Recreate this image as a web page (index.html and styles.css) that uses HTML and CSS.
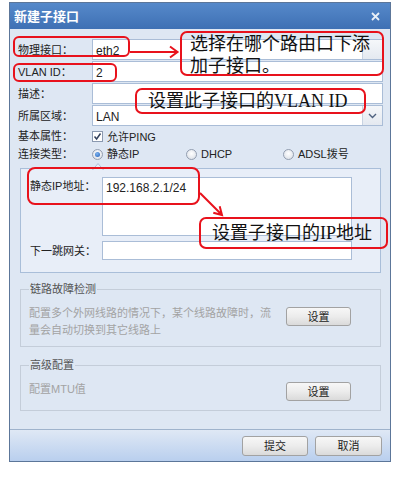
FILE: index.html
```html
<!DOCTYPE html>
<html>
<head>
<meta charset="utf-8">
<link rel="stylesheet" href="styles.css">
</head>
<body>
<div class="dialog">
  <div class="titlebar">
    <span class="title">新建子接口</span>
    <svg class="close" width="9" height="9" viewBox="0 0 9 9"><path d="M1 1L8 8M8 1L1 8"/></svg>
  </div>
  <div class="content">
    <div class="row"><span class="lbl">物理接口：</span><div class="field"><span class="val v-low">eth2</span><span class="dd"></span></div></div>
    <div class="row"><span class="lbl">VLAN ID：</span><div class="field"><span class="val v-low">2</span></div></div>
    <div class="row"><span class="lbl">描述：</span><div class="field"></div></div>
    <div class="row"><span class="lbl">所属区域：</span><div class="field"><span class="val v-low">LAN</span><span class="dd"><svg width="9" height="6" viewBox="0 0 9 6"><path d="M1 1L4.5 4.5L8 1"/></svg></span></div></div>
    <div class="row small"><span class="lbl">基本属性：</span><span class="check"><svg width="9" height="9" viewBox="0 0 9 9"><path d="M1.5 4.5L3.6 7L7.5 1.5"/></svg></span><span>允许PING</span></div>
    <div class="row small"><span class="lbl">连接类型：</span>
      <span class="opt o1"><span class="radio on"></span>静态IP</span>
      <span class="opt o2"><span class="radio"></span>DHCP</span>
      <span class="opt"><span class="radio"></span>ADSL拨号</span>
    </div>
    <div class="panel">
      <svg class="notch" width="12" height="8" viewBox="0 0 12 8"><polygon points="0,8 6,1 12,8" class="nfill"/><polyline points="0.5,8 6,1.5 11.5,8" class="nline"/></svg>
      <div class="prow"><span class="plbl">静态IP地址：</span><div class="area"><span class="val">192.168.2.1/24</span></div></div>
      <div class="prow p2"><span class="plbl">下一跳网关：</span><div class="inp"></div></div>
    </div>
    <fieldset class="fs1">
      <legend>链路故障检测</legend>
      <div class="fsrow">
        <div class="desc">配置多个外网线路的情况下，某个线路故障时，流<br>量会自动切换到其它线路上</div>
        <button class="btn set">设置</button>
      </div>
    </fieldset>
    <fieldset class="fs2">
      <legend>高级配置</legend>
      <div class="fsrow">
        <div class="desc">配置MTU值</div>
        <button class="btn set">设置</button>
      </div>
    </fieldset>
  </div>
  <div class="footer">
    <button class="btn ok">提交</button>
    <button class="btn cancel">取消</button>
  </div>
</div>

<div class="note n1">选择在哪个路由口下添<br>加子接口。</div>
<div class="note n2">设置此子接口的VLAN ID</div>
<div class="note n3">设置子接口的IP地址</div>
<div class="rbox r1"></div>
<div class="rbox r2"></div>
<div class="rbox r3"></div>
<svg class="arrows" width="393" height="478" viewBox="0 0 393 478">
  <path d="M130 52H177M170 46.5L177.5 52L170 57.5"/>
  <path d="M200 193L222 215M213.3 212.7L222 215L219.7 206.3"/>
</svg>
</body>
</html>
```

FILE: styles.css
```css
* { box-sizing: border-box; }
html, body { margin: 0; padding: 0; }
body {
  width: 393px;
  height: 478px;
  overflow: hidden;
  position: relative;
  background: #fff;
  font-family: "Liberation Sans", "Noto Sans CJK SC", sans-serif;
  font-size: 11px;
  color: #222;
}
.dialog {
  margin: 2px 0 0 9px;
  width: 382px;
  height: 460px;
  border: 1px solid #5c7699;
  background: #dee7f3;
  display: flex;
  flex-direction: column;
}
.titlebar {
  height: 26px;
  flex: none;
  background: linear-gradient(#5689ca, #3e70b4);
  display: flex;
  align-items: center;
  justify-content: space-between;
  padding: 0 10px 0 4px;
}
.title {
  color: #fff;
  font-size: 13px;
  font-weight: bold;
  line-height: 16px;
  font-family: "Noto Sans CJK SC", sans-serif;
}
.close path { stroke: #e9eff7; stroke-width: 1.8; fill: none; }
.content {
  flex: 1;
  padding: 10px 7px 0 8px;
}
.row {
  display: flex;
  align-items: center;
  height: 21px;
  margin-bottom: 1px;
}
.row.small { height: 18px; margin-bottom: 0; }
.lbl { width: 74px; flex: none; line-height: 14px; }
.field {
  flex: 1;
  height: 21px;
  border: 1px solid #aabdd7;
  background: #fff;
  display: flex;
  align-items: center;
  padding-left: 3px;
}
.val { font-size: 12px; line-height: 14px; color: #222; }
.v-low { padding-top: 3px; }
.dd {
  margin-left: auto;
  width: 20px;
  height: 100%;
  border-left: 1px solid #c8d3e2;
  background: linear-gradient(#f5f7fa, #e4e9f0);
  display: flex;
  align-items: center;
  justify-content: center;
}
.dd path { stroke: #4f6280; stroke-width: 1.4; fill: none; }
.check {
  width: 11px;
  height: 11px;
  margin-right: 4px;
  border: 1px solid #8a99b0;
  background: #fff;
  display: flex;
  align-items: center;
  justify-content: center;
}
.check path { stroke: #33415c; stroke-width: 1.5; fill: none; }
.opt { display: flex; align-items: center; line-height: 14px; }
.o1 { width: 94px; }
.o2 { width: 97px; }
.radio {
  width: 11px;
  height: 11px;
  margin-right: 4px;
  border-radius: 50%;
  border: 1px solid #939eb0;
  background: radial-gradient(circle at 50% 40%, #ffffff, #d6dbe3);
  display: flex;
  align-items: center;
  justify-content: center;
}
.radio.on::after {
  content: "";
  width: 5px;
  height: 5px;
  border-radius: 50%;
  background: radial-gradient(circle at 40% 35%, #7fb4f0, #1f5fb8);
}
.panel {
  position: relative;
  margin: 5px 2px 0 2px;
  border: 1px solid #a9bed9;
  background: #e8eef8;
  padding: 8px 28px 12px 9px;
}
.notch { position: absolute; top: -7px; left: 71px; }
.nfill { fill: #e8eef8; }
.nline { fill: none; stroke: #a9bed9; stroke-width: 1; }
.prow { display: flex; align-items: flex-start; }
.p2 { margin-top: 5px; align-items: center; }
.plbl { width: 72px; flex: none; line-height: 18px; }
.area {
  flex: 1;
  height: 59px;
  border: 1px solid #aabdd7;
  background: #fff;
  padding: 3px 0 0 3px;
}
.inp {
  flex: 1;
  height: 19px;
  border: 1px solid #aabdd7;
  background: #fff;
}
fieldset {
  margin: 9px 2px 0 2px;
  border: 1px solid #c4cdd9;
  padding: 9px 29px 7px 8px;
  min-width: 0;
}
.fs2 { margin-top: 11px; padding-bottom: 9px; }
legend {
  padding: 0 1px;
  line-height: 14px;
  color: #555;
  font-size: 11px;
}
.fsrow { display: flex; align-items: flex-start; }
.desc {
  width: 257px;
  line-height: 17px;
  color: #a3a3a3;
}
.btn {
  font-family: "Liberation Sans", "Noto Sans CJK SC", sans-serif;
  font-size: 11px;
  color: #222;
  height: 20px;
  border: 1px solid #a2a2a2;
  border-radius: 3px;
  background: linear-gradient(#f7f7f7, #ececec 50%, #dadada);
  padding: 0;
  line-height: 16px;
}
.set { width: 65px; height: 19px; margin-top: 2px; }
.fs2 .set { margin-top: 1px; }
.footer {
  flex: none;
  height: 32px;
  border-top: 1px solid #9fb3cc;
  background: linear-gradient(#dfe8f5, #b9cfee);
  display: flex;
  justify-content: flex-end;
  gap: 7px;
  padding: 6px 8px 0 0;
}
.ok { width: 66px; }
.cancel { width: 67px; }

.note {
  position: absolute;
  border: 2px solid #e8121c;
  border-radius: 7px;
  font-family: "Liberation Serif", "Noto Sans CJK SC", serif;
  font-size: 18px;
  color: #111;
}
.n1 { left: 180px; top: 31px; width: 204px; height: 45px; padding: 0 0 0 8px; line-height: 22px; }
.n2 { left: 135px; top: 88px; width: 231px; height: 26px; padding-left: 11px; line-height: 22px; }
.n3 { left: 199px; top: 217px; width: 189px; height: 32px; padding-left: 11px; line-height: 28px; }
.rbox {
  position: absolute;
  border: 2px solid #e8121c;
  border-radius: 6px;
}
.r1 { left: 13px; top: 36px; width: 117px; height: 21px; }
.r2 { left: 13px; top: 63px; width: 104px; height: 19px; }
.r3 { left: 27px; top: 167px; width: 173px; height: 38px; border-radius: 8px; }
.arrows { position: absolute; left: 0; top: 0; }
.arrows path { stroke: #e8121c; stroke-width: 2; fill: none; }
```
